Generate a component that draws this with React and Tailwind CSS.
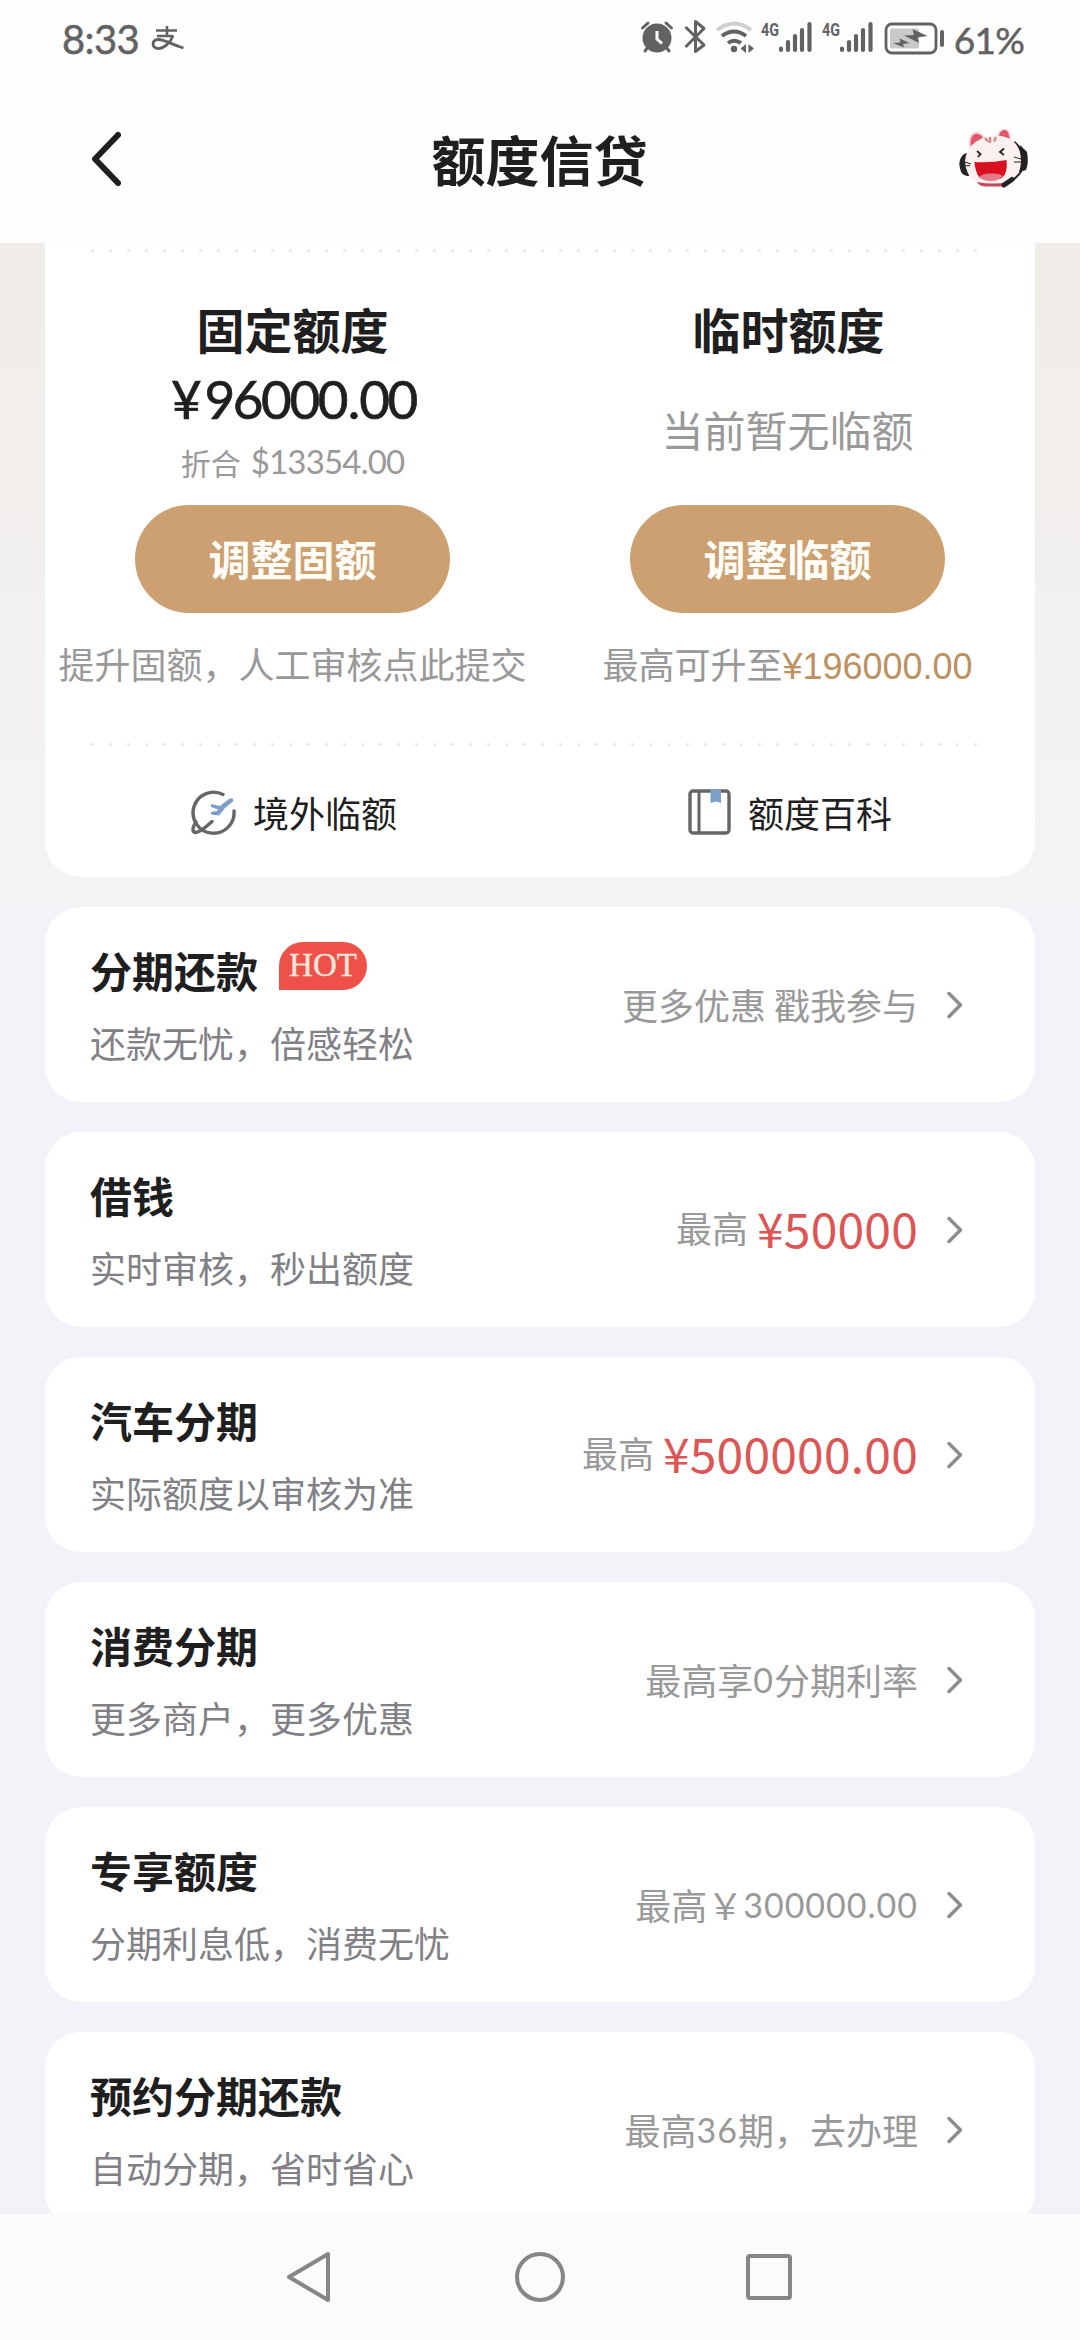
const CJK = "font-['Noto_Sans_CJK_SC',sans-serif]";
const NUM = "font-['Lato','Noto_Sans_CJK_SC',sans-serif]";

function StatusBar() {
  return (
    <div className={`flex h-[80px] items-start text-[#626262] ${NUM}`}>
      <div className="ml-[62px] mt-[14px] text-[40px] leading-[50px] tracking-[-0.6px] [-webkit-text-stroke:0.500px_#626262]">8:33</div>
      <svg className="ml-[12px] mt-[25px]" width="33" height="26" viewBox="0 0 33 26" fill="none" stroke="currentColor">
        <path d="M5 5.5H26M16 1V11M6 11H22" strokeWidth="2.6" />
        <path d="M22 10.5C20 17 13 24 6.500 23.500C0.500 22.500 0.500 15 7 14.500C13 14 20 19.500 32.500 23" strokeWidth="2.8" />
      </svg>
      <div className="flex-1" />
      <svg className="mt-[10px]" width="310" height="46" viewBox="640 10 310 46" fill="none" stroke="currentColor">
        <circle cx="657" cy="38" r="14.500" fill="currentColor" stroke="none" />
        <path d="M642.500 28L648 23M671.500 28L666 23M645 51L648 47M669 51L666 47" strokeWidth="3" strokeLinecap="round" />
        <path d="M657 31V39L662 43.500" stroke="#fff" strokeWidth="3" />
        <path d="M685.500 27L704 45L695.500 51.500V21.500L704 28.500L685.500 47" strokeWidth="3" strokeLinejoin="round" />
        <path d="M717 30Q734 17 751 30" stroke="#cfcfcf" strokeWidth="4" />
        <path d="M722 36Q734 27 746 36M728 43Q734 38.500 741 43" strokeWidth="4" />
        <circle cx="734" cy="49" r="3.200" fill="currentColor" stroke="none" />
        <path d="M746 44V53L740.500 48.500ZM748.500 44V53L754 48.500Z" fill="currentColor" stroke="none" />
        <path d="M781 48.500V50M788 42V50M795 36V50M802 30V50M809.500 24V50" strokeWidth="4.200" strokeLinecap="round" />
        <path d="M842 48.500V50M849 42V50M856 36V50M863 30V50M870.500 24V50" strokeWidth="4.200" strokeLinecap="round" />
        <g fill="currentColor" stroke="none" fontFamily="Roboto" fontSize="19" fontWeight="700">
          <text x="761" y="36" textLength="18" lengthAdjust="spacingAndGlyphs">4G</text>
          <text x="822" y="36" textLength="18" lengthAdjust="spacingAndGlyphs">4G</text>
        </g>
        <rect x="886" y="24" width="50" height="29" rx="6" strokeWidth="2.800" />
        <rect x="890" y="28.500" width="29" height="20" rx="2" fill="#c9c9c9" stroke="none" />
        <path d="M904 35.500L914 35L912.500 29L927.500 36L917.500 37.500L919 43ZM893 43L900.500 42.500L899.500 38.500L909.500 43L903 44L904 47.500Z" fill="currentColor" stroke="none" />
        <path d="M942 32V45" strokeWidth="4" strokeLinecap="round" />
      </svg>
      <div className="ml-[4px] mr-[56px] mt-[17px] text-[37px] leading-[46px] tracking-[-0.8px] [-webkit-text-stroke:0.500px_#626262]">61%</div>
    </div>
  );
}

function Mascot() {
  return (
    <svg width="70" height="62" viewBox="0 0 70 62" fill="none">
      <path d="M8 25C2 26 -1 34 1 40C2 46 5 48 10 48Z" fill="#262426" />
      <path d="M55 14Q61 19 63 26" stroke="#222" strokeWidth="2.500" />
      <path d="M61 17L68 24Q70 35 67 42L60 44Z" fill="#222" />
      <path d="M10 20C8 8 14 2 20 4Q25 6 27 12ZM38 9C39 0 47 -1 50 3Q53 8 52 16Z" fill="#f6d5d6" />
      <path d="M12 19C10 9 15 5 19 6Q23 7 25 12ZM40 8C41 2 46 0 49 4Q51 9 50 13Z" fill="#e2566b" />
      <path d="M12 18Q22 8 34 8Q46 7 54 13Q62 20 62 33Q62 48 49 54Q31 60 17 54Q6 46 6 33Q7 24 12 18Z" fill="#faf1ef" />
      <path d="M18 54Q33 57 50 54Q46 59 40 58.500H26Q20 58 18 54Z" fill="#c64a5c" />
      <path d="M15.500 34Q32 35 47.500 32Q49 45 43 50Q31 55 20 49Q16 43 15.500 34Z" fill="#d9101f" />
      <path d="M20 49Q24 45 32 45.500Q41 45 44 48.500Q39 53 32 53Q24 53 20 49Z" fill="#e5788a" />
      <path d="M18 23L21.500 26L19 29M45 20.500L41 24L45 27" stroke="#222" strokeWidth="1.800" />
      <path d="M26 10L29 13.500M31 9V15M37 9L35 13.500" stroke="#d28c8c" strokeWidth="2.500" />
      <path d="M6 34L12 36M6 38L11 37.500M55 29L62 31M55 34H62" stroke="#222" strokeWidth="1" />
      <path d="M63 42Q59 49 51 54" stroke="#222" strokeWidth="2" />
      <path d="M45 57L53 51.500" stroke="#222" strokeWidth="5" strokeLinecap="round" />
    </svg>
  );
}

function Header() {
  return (
    <div className="flex h-[163px] items-start justify-between pl-[89px] pr-[51px] text-[#1f1f1f]">
      <svg className="mt-[49px]" width="36" height="60" viewBox="0 0 36 60" fill="none" stroke="currentColor" strokeWidth="6" strokeLinecap="round" strokeLinejoin="round">
        <path d="M29 6L6 30L29 54" />
      </svg>
      <h1 className="ml-[-5px] mt-[39px] text-[54px] font-bold leading-[80px]">额度信贷</h1>
      <div className="mt-[48px]"><Mascot /></div>
    </div>
  );
}

function Dots() {
  return (
    <div className="ml-[46px] mr-[58px] flex h-[3px] justify-between">
      {Array.from({ length: 50 }, (_, i) => (
        <span key={i} className="size-[3px] rounded-full bg-[#e6e6e6]" />
      ))}
    </div>
  );
}

function PillButton({ children }) {
  return (
    <button className="h-[108px] w-[315px] rounded-full bg-[#cca070] pb-[2px] text-[42px] font-bold leading-[60px] text-[#fffdf8]">
      {children}
    </button>
  );
}

function PlaneIcon() {
  return (
    <svg width="45" height="46" viewBox="0 0 45 46" fill="none">
      <path d="M32 5.500A20.500 20.500 0 1 0 43 22M5 33C1 39 1 43.500 5 43.500C9 43 15 38 21 32.500" stroke="#666" strokeWidth="3.400" strokeLinecap="round" />
      <path d="M20 15L29 17L38 10Q43 7.500 42 12.500L34 19L28 26.500L20 25.500V23L26 22L27 20.500L20 18Z" fill="#7b9fc9" />
    </svg>
  );
}

function BookIcon() {
  return (
    <svg width="43" height="46" viewBox="0 0 43 46" fill="none">
      <rect x="2" y="2" width="39" height="42" rx="3" stroke="#666" strokeWidth="3.400" />
      <path d="M11 2V44" stroke="#666" strokeWidth="3" />
      <path d="M22.500 0H33V14L27.800 12.500L22.500 14Z" fill="#7b9fc9" />
    </svg>
  );
}

function QuotaCard() {
  return (
    <section className="mx-[45px] h-[634px] rounded-b-[36px] bg-white pt-[6px]">
      <Dots />
      <div className="grid h-[491px] grid-cols-2">
        <div className="flex flex-col items-center pt-[41px]">
          <h2 className="text-[48px] font-bold leading-[70px] text-[#1f1f1f]">固定额度</h2>
          <div className={`mt-[3px] pl-[2px] text-[53px] leading-[66px] tracking-[-2.400px] text-[#1f1f1f] [-webkit-text-stroke:0.700px_#1f1f1f] ${NUM}`}>
            <span className="mr-[5px]">¥</span>96000<span className="mx-[1.500px]">.</span>00
          </div>
          <div className="flex h-[73px] items-center pb-[13px] text-[30px] text-[#999]">
            <span>折合</span>
            <span className={`ml-[10px] text-[33px] tracking-[-0.800px] ${NUM}`}>$13354.00</span>
          </div>
          <PillButton>调整固额</PillButton>
          <p className="mt-[24px] whitespace-nowrap text-[36px] leading-[52px] text-[#999]">提升固额，人工审核点此提交</p>
        </div>
        <div className="flex flex-col items-center pt-[41px]">
          <h2 className="pl-[2px] text-[48px] font-bold leading-[70px] text-[#1f1f1f]">临时额度</h2>
          <div className="flex h-[142px] items-center pb-[11px] text-[42px] text-[#999]">当前暂无临额</div>
          <PillButton>调整临额</PillButton>
          <p className="mt-[24px] whitespace-nowrap text-[36px] leading-[52px] text-[#999]">
            最高可升至<span className="font-['Liberation_Sans',sans-serif] text-[#bd9160]">¥196000.00</span>
          </p>
        </div>
      </div>
      <Dots />
      <div className="grid grid-cols-2 pt-[42px] text-[36px] leading-[48px] text-[#1f1f1f]">
        <div className="flex items-center justify-center gap-[17px] pl-[3px]"><PlaneIcon />境外临额</div>
        <div className="flex items-center justify-center gap-[17px] pl-[5px]"><BookIcon />额度百科</div>
      </div>
    </section>
  );
}

function Row({ title, sub, hot, children }) {
  return (
    <section className="mx-[45px] flex h-[195px] shrink-0 items-center justify-between rounded-[36px] bg-white pl-[45px] pr-[71px]">
      <div>
        <div className="mt-[-3px] flex items-center">
          <h3 className="text-[42px] font-bold leading-[62px] text-[#1f1f1f]">{title}</h3>
          {hot && (
            <span className="mb-[8px] ml-[21px] flex h-[48px] w-[88px] items-center justify-center rounded-[24px] rounded-bl-none bg-[#ee5149] font-['Liberation_Serif',serif] text-[33px] leading-none text-[#fde6dc] [-webkit-text-stroke:0.400px_#fde6dc]">HOT</span>
          )}
        </div>
        <p className="mt-[15px] text-[36px] leading-[52px] text-[#808085]">{sub}</p>
      </div>
      <div className="flex items-center text-[36px] leading-[52px] text-[#999]">
        {children}
        <svg className="ml-[28px]" width="18" height="28" viewBox="0 0 18 28" fill="none" stroke="#8c8c8c" strokeWidth="3.500" strokeLinecap="round" strokeLinejoin="round">
          <path d="M3 2.500L14.500 14L3 25.500" />
        </svg>
      </div>
    </section>
  );
}

function Note({ children }) {
  return <div className="flex items-center whitespace-pre pb-[2px]">{children}</div>;
}

function Limit({ amount }) {
  return (
    <div className="flex items-center pb-[5px]">
      最高<span className="ml-[9px] text-[48px] tracking-[0.200px] text-[#dc5656]">{amount}</span>
    </div>
  );
}

function Digits({ children }) {
  return <span className={`pt-[3px] text-[34px] tracking-[1px] ${NUM}`}>{children}</span>;
}

function NavBar() {
  return (
    <nav className="flex h-[126px] items-start justify-center bg-[#fbfbfb] pt-[36px]">
      <svg width="510" height="54" viewBox="285 2250 510 54" fill="none" stroke="#868686" strokeWidth="4" strokeLinejoin="round">
        <path d="M328 2254V2300L289 2277Z" />
        <circle cx="540" cy="2277" r="23" />
        <rect x="748" y="2256" width="42" height="42" rx="2" />
      </svg>
    </nav>
  );
}

export default function App() {
  return (
    <div className={`flex h-[2340px] w-[1080px] flex-col overflow-hidden bg-[#fefefe] ${CJK}`}>
      <StatusBar />
      <Header />
      <main className="h-[1971px] overflow-hidden bg-[#f2f3f8]">
        <div className="h-[662px] bg-linear-to-b from-[#f0ece8] via-[#f2f0ee] to-[#f4f4f4]">
          <QuotaCard />
        </div>
        <div className="mt-[2px] flex flex-col gap-[30px]">
          <Row title="分期还款" sub="还款无忧，倍感轻松" hot><Note>更多优惠 戳我参与</Note></Row>
          <Row title="借钱" sub="实时审核，秒出额度"><Limit amount="¥50000" /></Row>
          <Row title="汽车分期" sub="实际额度以审核为准"><Limit amount="¥500000.00" /></Row>
          <Row title="消费分期" sub="更多商户，更多优惠"><Note>最高享<Digits>0</Digits>分期利率</Note></Row>
          <Row title="专享额度" sub="分期利息低，消费无忧"><Note>最高￥<Digits>300000.00</Digits></Note></Row>
          <Row title="预约分期还款" sub="自动分期，省时省心"><Note>最高<Digits>36</Digits>期，去办理</Note></Row>
        </div>
      </main>
      <NavBar />
    </div>
  );
}
